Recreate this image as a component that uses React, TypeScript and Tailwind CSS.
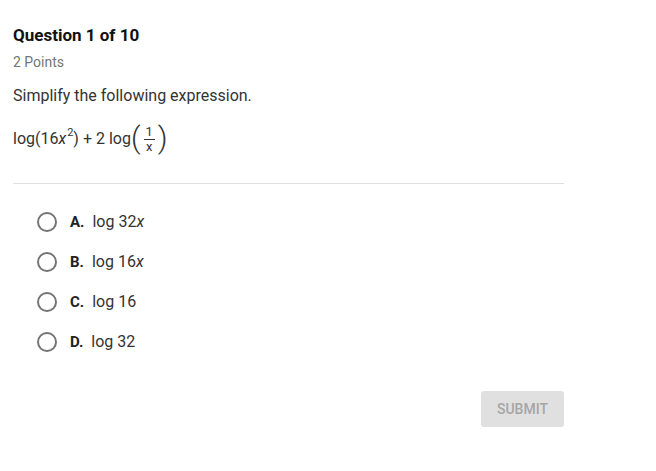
import React from "react";

const options = [
  { key: "A.", text: "log 32", x: true },
  { key: "B.", text: "log 16", x: true },
  { key: "C.", text: "log 16", x: false },
  { key: "D.", text: "log 32", x: false },
];

const App = () => {
  return (
    <div className="w-[656px] h-[471px] bg-white text-[#212121] font-['Roboto',sans-serif]">
      <div className="w-[551px] ml-[13px] pt-[25px]">
        <div className="text-[17px] font-bold leading-[20px] text-[#111]">Question 1 of 10</div>
        <div className="mt-[8px] text-[14px] leading-[18px] text-[#757575]">2 Points</div>
        <div className="mt-[15px] text-[16px] leading-[20px] text-[#333]">Simplify the following expression.</div>
        <div className="mt-[17px] flex items-center h-[32px] text-[16px] text-[#333]">
          <span>log(16</span>
          <span className="italic">x</span>
          <sup className="text-[11px] ml-[1px] top-[-6px]">2</sup>
          <span>) + 2 log</span>
          <span className="text-[30px] font-light leading-none -mt-[3px]">(</span>
          <span className="flex flex-col items-center text-[13px] leading-[12px] mx-[3px]">
            <span className="px-[2px] border-b border-[#333] pb-[1px]">1</span>
            <span className="mt-[1px]">x</span>
          </span>
          <span className="text-[30px] font-light leading-none -mt-[3px]">)</span>
        </div>
        <div className="mt-[28px] border-t border-[#e0e0e0]" />
        <div className="mt-[28px] ml-[24px] flex flex-col gap-[20px]">
          {options.map((o) => (
            <div key={o.key} className="flex items-center h-[20px]">
              <div className="w-[20px] h-[20px] rounded-full border-2 border-[#757575]" />
              <span className="ml-[13px] text-[15px] font-bold text-[#222]">{o.key}</span>
              <span className="ml-[8px] text-[16px] text-[#333]">
                {o.text}
                {o.x && <span className="italic">x</span>}
              </span>
            </div>
          ))}
        </div>
        <div className="mt-[39px] flex justify-end">
          <button className="w-[83px] h-[36px] rounded-[3px] bg-[#e0e0e0] text-[#a6a6a6] text-[14px] font-medium">
            SUBMIT
          </button>
        </div>
      </div>
    </div>
  );
};

export default App;
